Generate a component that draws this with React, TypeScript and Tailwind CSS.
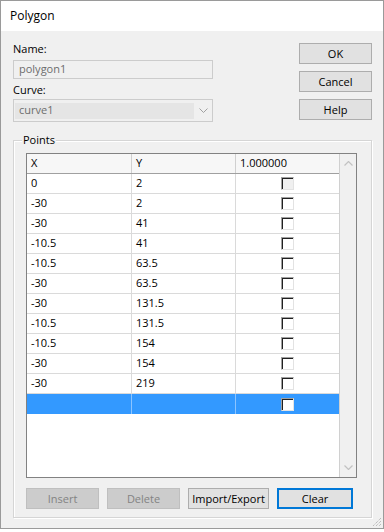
import React from "react";

const rows: [string, string][] = [
  ["0", "2"],
  ["-30", "2"],
  ["-30", "41"],
  ["-10.5", "41"],
  ["-10.5", "63.5"],
  ["-30", "63.5"],
  ["-30", "131.5"],
  ["-10.5", "131.5"],
  ["-10.5", "154"],
  ["-30", "154"],
  ["-30", "219"],
];

function Check({ gray }: { gray?: boolean }) {
  return (
    <div
      className={
        "w-[13px] h-[13px] border-t border-l border-t-[#a0a0a0] border-l-[#a0a0a0] border-b border-r border-b-[#e3e3e3] border-r-[#e3e3e3] shadow-[inset_1px_1px_0_#202020] " +
        (gray ? "bg-[#f0f0f0]" : "bg-white")
      }
    />
  );
}

function Btn({ label, w, disabled, def }: { label: string; w: string; disabled?: boolean; def?: boolean }) {
  const base = "h-[21px] flex items-center justify-center text-[11px] leading-none ";
  let cls = "";
  if (disabled) cls = "bg-[#cccccc] border border-[#bfbfbf] text-[#838383]";
  else if (def) cls = "bg-[#e1e1e1] border-2 border-[#0078d7] text-black";
  else cls = "bg-[#e1e1e1] border border-[#adadad] text-black";
  return <div className={base + cls + " " + w}>{label}</div>;
}

export default function App() {
  return (
    <div
      className="w-[384px] h-[532px] bg-white overflow-hidden"
      style={{ fontFamily: '"Open Sans", "Noto Sans", sans-serif' }}
    >
      <div className="relative w-[384px] h-[529px] border border-[#9a9a9a] bg-[#f0f0f0] flex flex-col">
        {/* title */}
        <div className="h-[30px] bg-white flex items-center pl-[9px] text-[12px] text-black">Polygon</div>
        {/* top area */}
        <div className="flex justify-between pl-[12px] pr-[11px]">
          <div className="w-[200px] pt-[10px] flex flex-col">
            <div className="h-[16px] leading-[16px] text-[11px] text-black">Name:</div>
            <div className="mt-[3px] h-[19px] border border-[#cccccc] bg-[#f0f0f0] flex items-center pl-[5px] text-[11px] text-[#6d6d6d]">
              polygon1
            </div>
            <div className="mt-[3px] h-[16px] leading-[16px] text-[11px] text-black">Curve:</div>
            <div className="mt-[1px] h-[23px] border border-[#cccccc] bg-[#f0f0f0] flex items-center pl-[1px] pr-[1px]">
              <div className="h-[16px] w-[179px] bg-[#e5e5e5] flex items-center pl-[4px] text-[11px] text-[#6d6d6d]">
                curve1
              </div>
              <div className="flex-1 flex items-center justify-center pl-[2px]">
                <svg width="9" height="5" viewBox="0 0 9 5">
                  <polyline points="0.5,0.5 4.5,4.5 8.5,0.5" fill="none" stroke="#a0a0a0" strokeWidth="1" />
                </svg>
              </div>
            </div>
          </div>
          <div className="pt-[12px] flex flex-col gap-[7px]">
            <Btn label="OK" w="w-[73px]" />
            <Btn label="Cancel" w="w-[73px]" />
            <Btn label="Help" w="w-[73px]" />
          </div>
        </div>
        {/* group box */}
        <div className="relative ml-[12px] mt-[18px] w-[359px] h-[378px] border border-[#d5d5d5] shadow-[inset_1px_1px_0_#ffffff,1px_1px_0_#ffffff] p-[12px]">
          <div className="absolute left-[8px] top-[-9px] px-[1px] bg-[#f0f0f0] text-[11px] leading-[16px] text-black">
            Points
          </div>
          {/* table */}
          <div className="w-[331px] h-[325px] border border-[#828282] bg-white flex">
            <div className="w-[312px] flex flex-col">
              <div className="h-[20px] flex border-b border-[#a0a0a0] bg-[#f7f7f7] text-[11px] text-black">
                <div className="w-[105px] border-r border-[#d0d0d0] pl-[4px] flex items-center">X</div>
                <div className="w-[104px] border-r border-[#d0d0d0] pl-[4px] flex items-center">Y</div>
                <div className="w-[103px] pl-[4px] flex items-center">1.000000</div>
              </div>
              {rows.map((r, i) => (
                <div key={i} className="h-[20px] flex border-b border-[#dadada] text-[11px] text-black">
                  <div className="w-[105px] border-r border-[#dadada] pl-[4px] flex items-center">{r[0]}</div>
                  <div className="w-[104px] border-r border-[#dadada] pl-[4px] flex items-center">{r[1]}</div>
                  <div className="w-[103px] flex items-center justify-center">
                    <Check gray={i === 0} />
                  </div>
                </div>
              ))}
              <div className="h-[20px] flex bg-[#3399ff]">
                <div className="w-[105px] border-r border-[#8cc4ff]" />
                <div className="w-[104px] border-r border-[#8cc4ff]" />
                <div className="w-[103px] flex items-center justify-center">
                  <Check />
                </div>
              </div>
            </div>
            {/* scrollbar */}
            <div className="w-[17px] border-l border-[#d0d0d0] bg-[#f0f0f0] flex flex-col justify-between items-center py-[7px]">
              <svg width="9" height="5" viewBox="0 0 9 5">
                <polyline points="0.5,4.5 4.5,0.5 8.5,4.5" fill="none" stroke="#c2c2c2" strokeWidth="1.2" />
              </svg>
              <svg width="9" height="5" viewBox="0 0 9 5">
                <polyline points="0.5,0.5 4.5,4.5 8.5,0.5" fill="none" stroke="#c2c2c2" strokeWidth="1.2" />
              </svg>
            </div>
          </div>
          {/* buttons */}
          <div className="mt-[10px] flex gap-[8px]">
            <Btn label="Insert" w="w-[73px]" disabled />
            <Btn label="Delete" w="w-[73px]" disabled />
            <Btn label="Import/Export" w="w-[81px]" />
            <Btn label="Clear" w="w-[76px]" def />
          </div>
        </div>
        {/* resize grip */}
        <div className="absolute right-[1px] bottom-[1px]">
          <svg width="12" height="12" viewBox="0 0 12 12">
            <line x1="11" y1="3" x2="3" y2="11" stroke="#a8a8a8" strokeWidth="1" strokeDasharray="1 1" />
            <line x1="11" y1="6" x2="6" y2="11" stroke="#a8a8a8" strokeWidth="1" strokeDasharray="1 1" />
            <line x1="11" y1="9" x2="9" y2="11" stroke="#a8a8a8" strokeWidth="1" strokeDasharray="1 1" />
          </svg>
        </div>
      </div>
    </div>
  );
}
